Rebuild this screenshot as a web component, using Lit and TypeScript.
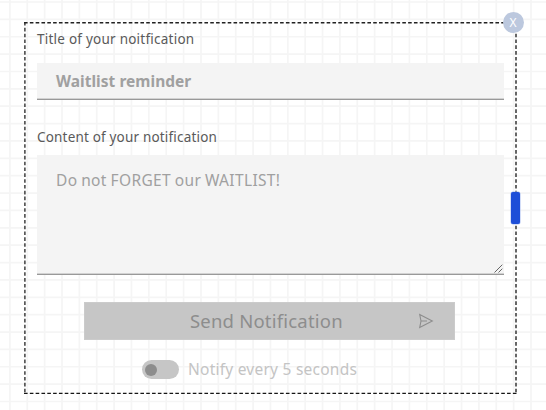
import { LitElement, html, css } from "lit";
import { customElement } from "lit/decorators.js";

const STEP = 17.37;
const columns = Array.from({ length: 31 }, (_, i) => `M${(9.9 + i * STEP).toFixed(2)} 0V410`).join("");
const rows = Array.from({ length: 24 }, (_, i) => `M0 ${(2 + i * STEP).toFixed(2)}H546`).join("");

@customElement("app-root")
export class AppRoot extends LitElement {
  static styles = css`
    :host {
      display: block;
      position: relative;
      box-sizing: border-box;
      width: 546px;
      height: 410px;
      padding: 22px 0 0 24px;
      overflow: hidden;
      background: #fff;
      font-family: "Noto Sans", sans-serif;
    }
    .grid {
      position: absolute;
      inset: 0;
      width: 100%;
      height: 100%;
    }
    .node {
      position: relative;
      box-sizing: border-box;
      width: 493px;
      height: 372px;
      padding: 8px 13px 0;
      display: flex;
      flex-direction: column;
    }
    .frame {
      position: absolute;
      inset: 0;
      width: 493px;
      height: 372px;
    }
    .label {
      height: 20px;
      line-height: 19px;
      font-size: 13.5px;
      color: #5a5a5a;
      white-space: nowrap;
    }
    .l1 { letter-spacing: 0.24px; }
    .l2 { letter-spacing: 0.18px; margin-top: 28px; }
    .field {
      position: relative;
      box-sizing: border-box;
      width: 467px;
      padding-left: 19px;
      background: #f4f4f4;
      border-bottom: 1px solid #999;
      box-shadow: inset 0 -1px #d2d2d2;
      color: #a0a0a0;
      white-space: nowrap;
    }
    .title {
      margin-top: 13px;
      height: 37px;
      line-height: 37px;
      font-size: 15.5px;
      font-weight: 700;
      letter-spacing: 0.03px;
    }
    .content {
      margin-top: 7px;
      height: 120px;
      padding-top: 14px;
      line-height: 22px;
      font-size: 15.5px;
      letter-spacing: 0.35px;
      word-spacing: -0.6px;
    }
    .grip {
      position: absolute;
      right: 1px;
      bottom: 1px;
      width: 9px;
      height: 9px;
    }
    .send {
      display: flex;
      align-items: center;
      box-sizing: border-box;
      margin: 27px 0 0 47px;
      width: 371px;
      height: 38px;
      padding: 0 21px 0 106px;
      justify-content: space-between;
      background: #c6c6c6;
      box-shadow: inset 0 0 0 1px #cbcbcb;
      color: #8d8d8d;
      font-size: 18.5px;
      letter-spacing: 0.2px;
      white-space: nowrap;
    }
    .send span { padding-bottom: 2px; }
    .send svg { width: 16px; height: 16px; display: block; }
    .notify {
      display: flex;
      align-items: center;
      margin: 20px 0 0 105px;
      height: 19px;
      gap: 9px;
      color: #c4c4c4;
      font-size: 15.5px;
      letter-spacing: 0.24px;
      white-space: nowrap;
    }
    .notify span { padding-bottom: 1px; }
    .toggle {
      box-sizing: border-box;
      width: 37px;
      height: 19px;
      border-radius: 10px;
      padding: 3.5px 3px;
      background: #c6c6c6;
    }
    .knob {
      width: 12px;
      height: 12px;
      border-radius: 50%;
      background: #8d8d8d;
    }
    .close {
      position: absolute;
      left: 478.5px;
      top: -10.5px;
      width: 21px;
      height: 21px;
      border-radius: 50%;
      background: #bcc8de;
      color: #fff;
      font-size: 12px;
      line-height: 21px;
      text-align: center;
    }
    .handle {
      position: absolute;
      left: 487px;
      top: 170px;
      width: 9px;
      height: 32px;
      border-radius: 2px;
      background: #1d4ed8;
      box-shadow: 0 0 0 0.5px #a9bdf2;
    }
  `;

  render() {
    return html`
      <svg class="grid" fill="none" stroke="#f5f5f5" stroke-width="1.7">
        <path d=${columns} />
        <path d=${rows} />
      </svg>
      <div class="node">
        <svg class="frame" fill="none" stroke-dasharray="3.6 2.22">
          <path d="M0 0.75H493" stroke="#222" stroke-width="1.3" />
          <path d="M0 371.4H493" stroke="#161616" stroke-width="1.1" />
          <path d="M0.9 0V372" stroke="#222" stroke-width="1.3" />
          <path d="M492 0V372" stroke="#666" stroke-width="2" />
        </svg>
        <div class="label l1">Title of your noitfication</div>
        <div class="field title">Waitlist reminder</div>
        <div class="label l2">Content of your notification</div>
        <div class="field content">
          Do not FORGET our WAITLIST!
          <svg class="grip" viewBox="0 0 9 9" fill="none" stroke="#555" stroke-width="0.9">
            <path d="M0.5 8.5L8.3 0.7M4.5 8.5L8.3 4.7" />
          </svg>
        </div>
        <div class="send">
          <span>Send Notification</span>
          <svg viewBox="0 0 16 16" fill="none" stroke="#8d8d8d" stroke-width="1.1">
            <path d="M1.7 1.5L14.3 8L1.7 14.5L3 8ZM3 8H9" />
          </svg>
        </div>
        <div class="notify">
          <div class="toggle"><div class="knob"></div></div>
          <span>Notify every 5 seconds</span>
        </div>
        <div class="close">X</div>
        <div class="handle"></div>
      </div>
    `;
  }
}
